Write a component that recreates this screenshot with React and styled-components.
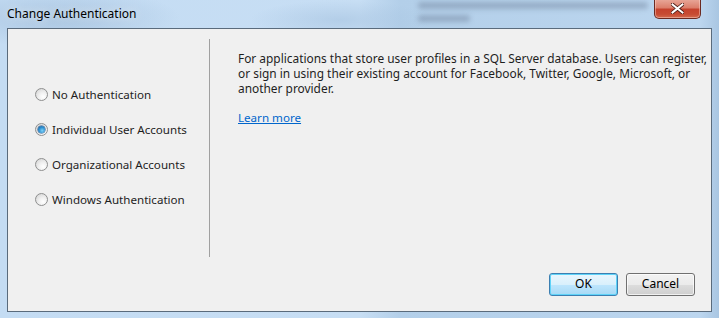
import React, { useState } from "react";
import styled, { createGlobalStyle } from "styled-components";

const GlobalStyle = createGlobalStyle`
  html, body {
    margin: 0;
    padding: 0;
    background: #b9d3ec;
    overflow: hidden;
  }
  * {
    box-sizing: border-box;
  }
`;

const StyledWindow = styled.div`
  position: relative;
  width: 719px;
  height: 318px;
  display: flex;
  flex-direction: column;
  padding: 0 7px 6px 7px;
  font-family: "Segoe UI", "Noto Sans", sans-serif;
  font-size: 11.6px;
  color: #1e1e1e;
  background:
    radial-gradient(ellipse 120px 30px at 60px 18px, rgba(150, 180, 210, 0.55), transparent),
    radial-gradient(ellipse 90px 20px at 340px 20px, rgba(160, 190, 220, 0.5), transparent),
    linear-gradient(90deg, #c4dcf3 0px, #c7def4 360px, #b3cfe9 400px, #bcd6ef 700px, #a9c6e2 719px);
  overflow: hidden;
`;

// blurred shapes of the window behind the glass frame
const StyledBackdropSmudge = styled.div`
  position: absolute;
  left: ${(p) => p.$left}px;
  top: ${(p) => p.$top}px;
  width: ${(p) => p.$width}px;
  height: 7px;
  border-radius: 3px;
  background: rgba(80, 95, 120, 0.32);
  filter: blur(2.5px);
  pointer-events: none;
`;

const StyledTitleBar = styled.div`
  position: relative;
  height: 28px;
  display: flex;
  align-items: center;
  padding-bottom: 1px;
`;

const StyledTitle = styled.span`
  font-size: 12px;
  color: #000;
  text-shadow: 0 0 8px rgba(255, 255, 255, 0.9);
`;

const StyledCloseButton = styled.div`
  position: absolute;
  top: -1px;
  right: 11px;
  width: 47px;
  height: 20px;
  border: 1px solid #6b2a22;
  border-top: none;
  border-radius: 0 0 5px 5px;
  background: linear-gradient(180deg, #e9a99b 0%, #dc7f6c 45%, #c5422d 55%, #c74b33 80%, #d36a4e 100%);
  box-shadow: inset 0 0 0 1px rgba(255, 220, 210, 0.45);
  display: flex;
  align-items: center;
  justify-content: center;
`;

const StyledContent = styled.div`
  flex: 1;
  display: flex;
  flex-direction: column;
  background: #f0f0f0;
  border: 1px solid #5a6b7c;
  padding: 10px 16px 15px 0;
`;

const StyledMain = styled.div`
  display: flex;
  height: 218px;
`;

const StyledOptions = styled.div`
  width: 202px;
  flex-shrink: 0;
  display: flex;
  flex-direction: column;
  justify-content: center;
  gap: 18px;
  padding: 0 0 2px 27px;
  border-right: 1px solid #a0a0a0;
`;

const StyledOption = styled.label`
  display: flex;
  align-items: center;
  gap: 4px;
  height: 17px;
  cursor: default;
  white-space: nowrap;
`;

const StyledRadio = styled.span`
  width: 13px;
  height: 13px;
  border-radius: 50%;
  border: 1px solid #8e8f8f;
  background: radial-gradient(circle at 65% 70%, #ffffff 0%, #f0f0f0 40%, #cfcfcf 100%);
  display: flex;
  align-items: center;
  justify-content: center;
  flex-shrink: 0;

  &::after {
    content: "";
    display: ${(p) => (p.$checked ? "block" : "none")};
    width: 7px;
    height: 7px;
    border-radius: 50%;
    background: radial-gradient(circle at 60% 65%, #7fd1f7 0%, #2c8fd0 50%, #174c88 100%);
    box-shadow: 0 0 0 0.5px #1b4f87;
  }
`;

const StyledDescription = styled.div`
  flex: 1;
  padding: 12px 0 0 28px;
`;

const StyledText = styled.p`
  margin: 0;
  font-size: 11.9px;
  line-height: 15px;
  white-space: nowrap;
`;

const StyledLink = styled.a`
  display: inline-block;
  margin-top: 14px;
  color: #0066cc;
  text-decoration: underline;
  line-height: 15px;
  cursor: pointer;
`;

const StyledButtons = styled.div`
  margin-top: auto;
  display: flex;
  justify-content: flex-end;
  gap: 8px;
`;

const StyledButton = styled.button`
  width: 69px;
  height: 23px;
  font-family: inherit;
  font-size: 12px;
  color: #000;
  border-radius: 3px;
  border: 1px solid ${(p) => (p.$default ? "#3c7fb1" : "#707070")};
  background: ${(p) =>
    p.$default
      ? "linear-gradient(180deg, #eaf6fd 0%, #d9f0fc 50%, #bee6fd 51%, #a7d9f5 100%)"
      : "linear-gradient(180deg, #f2f2f2 0%, #ebebeb 50%, #dddddd 51%, #cfcfcf 100%)"};
  box-shadow: ${(p) =>
    p.$default
      ? "inset 0 0 0 1px #5fd3f8"
      : "inset 0 0 0 1px rgba(255, 255, 255, 0.7)"};
  padding: 0;
  padding-bottom: 2px;
`;

const options = [
  "No Authentication",
  "Individual User Accounts",
  "Organizational Accounts",
  "Windows Authentication",
];

export default function App() {
  const [selected, setSelected] = useState(1);

  return (
    <>
      <GlobalStyle />
      <StyledWindow>
        <StyledBackdropSmudge $left={418} $top={2} $width={230} />
        <StyledBackdropSmudge $left={418} $top={15} $width={52} />
        <StyledTitleBar>
          <StyledTitle>Change Authentication</StyledTitle>
          <StyledCloseButton>
            <svg width="13" height="11" viewBox="0 0 13 11">
              <path
                d="M1.5 1.5 L11.5 9.5 M11.5 1.5 L1.5 9.5"
                stroke="#4a1a14"
                strokeWidth="3.6"
                strokeLinecap="square"
              />
              <path
                d="M1.5 1.5 L11.5 9.5 M11.5 1.5 L1.5 9.5"
                stroke="#ffffff"
                strokeWidth="2"
                strokeLinecap="square"
              />
            </svg>
          </StyledCloseButton>
        </StyledTitleBar>
        <StyledContent>
          <StyledMain>
            <StyledOptions>
              {options.map((label, i) => (
                <StyledOption key={label} onClick={() => setSelected(i)}>
                  <StyledRadio $checked={selected === i} />
                  {label}
                </StyledOption>
              ))}
            </StyledOptions>
            <StyledDescription>
              <StyledText>
                For applications that store user profiles in a SQL Server database. Users can register,
                <br />
                or sign in using their existing account for Facebook, Twitter, Google, Microsoft, or
                <br />
                another provider.
              </StyledText>
              <StyledLink>Learn more</StyledLink>
            </StyledDescription>
          </StyledMain>
          <StyledButtons>
            <StyledButton $default>OK</StyledButton>
            <StyledButton>Cancel</StyledButton>
          </StyledButtons>
        </StyledContent>
      </StyledWindow>
    </>
  );
}
